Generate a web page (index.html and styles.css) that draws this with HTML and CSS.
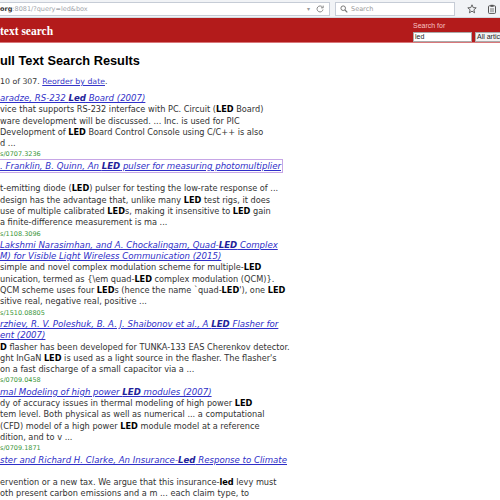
FILE: index.html
```html
<!DOCTYPE html>
<html>
<head>
<meta charset="utf-8">
<link rel="stylesheet" href="styles.css">
</head>
<body>
<div class="toolbar">
  <div class="urlbar">
    <span class="url"><span class="host">org</span>:8081/?query=led&amp;box</span>
    <span class="drop">&#9662;</span>
    <svg class="reload" width="8" height="8" viewBox="0 0 8 8"><path d="M6.5 2.2A3 3 0 1 0 7 4.5" fill="none" stroke="#888" stroke-width="1"/><path d="M7.2 0.6V2.8H5" fill="none" stroke="#888" stroke-width="1"/></svg>
  </div>
  <div class="searchbar">
    <svg width="8" height="8" viewBox="0 0 8 8"><circle cx="3.2" cy="3.2" r="2.3" fill="none" stroke="#777" stroke-width="1"/><path d="M5 5L7.3 7.3" stroke="#777" stroke-width="1.2"/></svg>
    <span>Search</span>
  </div>
  <div class="tb-icons">
    <svg width="10" height="10" viewBox="0 0 10 10"><path d="M5 0.8L6.2 3.6L9.2 3.8L6.9 5.8L7.6 8.8L5 7.2L2.4 8.8L3.1 5.8L0.8 3.8L3.8 3.6Z" fill="none" stroke="#555" stroke-width="0.9" stroke-linejoin="round"/></svg>
    <svg width="10" height="10" viewBox="0 0 10 10"><rect x="1.5" y="1.8" width="7" height="7.6" rx="0.8" fill="none" stroke="#555" stroke-width="1"/><rect x="3.5" y="0.8" width="3" height="2" fill="#555"/><path d="M3 5h4M3 7h4" stroke="#555" stroke-width="0.8"/></svg>
  </div>
</div>
<div class="masthead">
  <div class="site">text search</div>
  <div class="qform">
    <div class="qlabel">Search for</div>
    <div class="qrow">
      <span class="qinput">led</span>
      <span class="qselect">All articles</span>
    </div>
  </div>
</div>
<div class="main">
  <h1 class="heading">ull Text Search Results</h1>
  <div class="summary">10 of 307. <a class="link" href="#">Reorder by date</a>.</div>

  <div class="result">
    <div class="line title"><a href="#">aradze, RS-232 <b>Led</b> Board (2007)</a></div>
    <div class="line">vice that supports RS-232 interface with PC. Circuit (<b>LED</b> Board)</div>
    <div class="line">ware development will be discussed. ... Inc. is used for PIC</div>
    <div class="line">Development of <b>LED</b> Board Control Console using C/C++ is also</div>
    <div class="line">d ...</div>
    <div class="line id">s/0707.3236</div>
  </div>

  <div class="result">
    <div class="line title"><a class="visited" href="#">. Franklin, B. Quinn, An <b>LED</b> pulser for measuring photomultiplier</a></div>
    <div class="line"></div>
    <div class="line">t-emitting diode (<b>LED</b>) pulser for testing the low-rate response of ...</div>
    <div class="line">design has the advantage that, unlike many <b>LED</b> test rigs, it does</div>
    <div class="line">use of multiple calibrated <b>LED</b>s, making it insensitive to <b>LED</b> gain</div>
    <div class="line">a finite-difference measurement is ma ...</div>
    <div class="line id">s/1108.3096</div>
  </div>

  <div class="result">
    <div class="line title"><a href="#">Lakshmi Narasimhan, and A. Chockalingam, Quad-<b>LED</b> Complex</a></div>
    <div class="line title"><a href="#">M) for Visible Light Wireless Communication (2015)</a></div>
    <div class="line">simple and novel complex modulation scheme for multiple-<b>LED</b></div>
    <div class="line">unication, termed as {\em quad-<b>LED</b> complex modulation (QCM)}.</div>
    <div class="line">QCM scheme uses four <b>LED</b>s (hence the name `quad-<b>LED</b>'), one <b>LED</b></div>
    <div class="line">sitive real, negative real, positive ...</div>
    <div class="line id">s/1510.08805</div>
  </div>

  <div class="result">
    <div class="line title"><a href="#">rzhiev, R. V. Poleshuk, B. A. J. Shaibonov et al., A <b>LED</b> Flasher for</a></div>
    <div class="line title"><a href="#">ent (2007)</a></div>
    <div class="line"><b>D</b> flasher has been developed for TUNKA-133 EAS Cherenkov detector.</div>
    <div class="line">ght InGaN <b>LED</b> is used as a light source in the flasher. The flasher's</div>
    <div class="line">on a fast discharge of a small capacitor via a ...</div>
    <div class="line id">s/0709.0458</div>
  </div>

  <div class="result">
    <div class="line title"><a href="#">mal Modeling of high power <b>LED</b> modules (2007)</a></div>
    <div class="line">dy of accuracy issues in thermal modeling of high power <b>LED</b></div>
    <div class="line">tem level. Both physical as well as numerical ... a computational</div>
    <div class="line">(CFD) model of a high power <b>LED</b> module model at a reference</div>
    <div class="line">dition, and to v ...</div>
    <div class="line id">s/0709.1871</div>
  </div>

  <div class="result">
    <div class="line title"><a href="#">ster and Richard H. Clarke, An Insurance-<b>Led</b> Response to Climate</a></div>
    <div class="line"></div>
    <div class="line">ervention or a new tax. We argue that this insurance-<b>led</b> levy must</div>
    <div class="line">oth present carbon emissions and a m ... each claim type, to</div>
    <div class="line">de a global insurance-<b>led</b> response to climate change.</div>
  </div>
</div>
</body>
</html>
```
FILE: styles.css
```css
html, body {
  margin: 0;
  padding: 0;
  width: 500px;
  height: 500px;
  overflow: hidden;
  background: #fff;
  font-family: "DejaVu Sans", Verdana, sans-serif;
}

.toolbar {
  height: 18px;
  background: #f1f3f6;
  border-bottom: 1px solid #d4d8de;
  box-sizing: border-box;
  display: flex;
  align-items: center;
  gap: 5px;
}

.urlbar {
  width: 330px;
  height: 14px;
  box-sizing: border-box;
  background: #fff;
  border: 1px solid #c6ccd6;
  border-left: none;
  display: flex;
  align-items: center;
  font-size: 6.5px;
  color: #a0a4aa;
}

.url {
  flex: 1;
  white-space: nowrap;
}

.host {
  color: #333;
  font-weight: bold;
}

.drop {
  color: #999;
  font-size: 6px;
  margin-right: 6px;
}

.reload {
  margin-right: 5px;
}

.searchbar {
  width: 120px;
  height: 14px;
  box-sizing: border-box;
  background: #fff;
  border: 1px solid #c6ccd6;
  display: flex;
  align-items: center;
  gap: 3px;
  padding-left: 4px;
  font-size: 6.5px;
  color: #999;
}

.tb-icons {
  display: flex;
  gap: 10px;
  margin-left: 7px;
}

.masthead {
  height: 25px;
  background: #b31b1b;
  border-bottom: 1px solid #d9777a;
  box-sizing: border-box;
  display: grid;
  grid-template-columns: 413px 1fr;
}

.site {
  color: #fff;
  font-family: "Liberation Serif", "Times New Roman", serif;
  font-weight: bold;
  font-size: 11.5px;
  line-height: 12px;
  padding-top: 7px;
  white-space: nowrap;
}

.qform {
  overflow: hidden;
  white-space: nowrap;
  padding-top: 3px;
}

.qlabel {
  color: #f7c4c4;
  font-family: "Liberation Sans", Arial, sans-serif;
  font-size: 7px;
  line-height: 9px;
}

.qrow {
  display: flex;
  gap: 3px;
  margin-top: 2px;
}

.qinput, .qselect {
  display: block;
  height: 10px;
  box-sizing: border-box;
  background: #fff;
  border: 1px solid #aaa;
  font-family: "Liberation Sans", Arial, sans-serif;
  font-size: 7px;
  line-height: 8px;
  padding-left: 1px;
  color: #222;
}

.qinput {
  width: 59px;
  flex: none;
}

.qselect {
  width: 40px;
  flex: none;
  background: #f2f2f2;
}

.main {
  white-space: nowrap;
}

.heading {
  margin: 10px 0 0 0;
  font-family: "Liberation Sans", Arial, sans-serif;
  font-weight: bold;
  font-size: 12.8px;
  line-height: 16px;
  color: #000;
}

.summary {
  margin-top: 7px;
  font-size: 7.8px;
  line-height: 11px;
  color: #333;
  margin-bottom: 6px;
}

.link {
  color: #3535c8;
}

.line {
  font-size: 8.2px;
  line-height: 11.3px;
  height: 11.3px;
  color: #333;
}

.line b {
  color: #000;
}

.title {
  font-size: 8.6px;
}

.title a {
  color: #2f2fc8;
  font-style: italic;
}

.title a b {
  color: #22229a;
}

.title a.visited {
  outline: 1px solid #c6a6e6;
  outline-offset: 1px;
}

.id {
  font-size: 6.5px;
  color: #3a963a;
}
```
